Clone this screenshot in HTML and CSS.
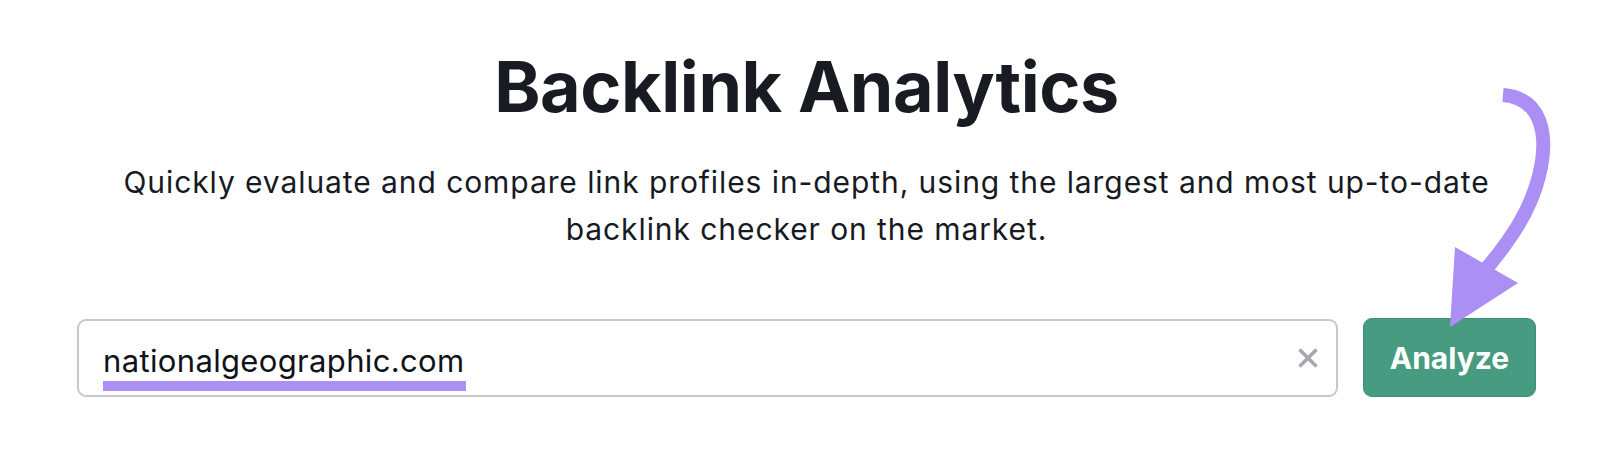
FILE: index.html
```html
<!DOCTYPE html>
<html lang="en">
<head>
<meta charset="utf-8">
<title>Backlink Analytics</title>
<link rel="stylesheet" href="styles.css">
</head>
<body>
<main class="page">
  <h1 class="title">Backlink Analytics</h1>
  <p class="lead">Quickly evaluate and compare link profiles in-depth, using the largest and most up-to-date backlink checker on the market.</p>
  <form class="search">
    <div class="field">
      <span class="value">nationalgeographic.com</span>
      <svg class="clear" viewBox="0 0 20 20" width="20" height="20" aria-hidden="true">
        <path d="M1.5 1.5 L18.5 18.5 M18.5 1.5 L1.5 18.5" stroke="currentColor" stroke-width="3.6" stroke-linecap="butt"/>
      </svg>
    </div>
    <button class="analyze" type="button">Analyze</button>
  </form>
</main>
<svg class="arrow" width="1600" height="475" viewBox="0 0 1600 475" aria-hidden="true">
  <path d="M1503 95 C1540 98 1550 132 1539 176 C1530 212 1510 240 1487 268" fill="none" stroke="#ab8ff4" stroke-width="14"/>
  <polygon points="1455,247 1518,283 1450,327" fill="#ab8ff4"/>
</svg>
</body>
</html>
```
FILE: styles.css
```css
html, body {
  margin: 0;
  padding: 0;
  background: #ffffff;
}
body {
  width: 1600px;
  height: 475px;
  overflow: hidden;
  position: relative;
  font-family: Inter, "Liberation Sans", sans-serif;
  color: #171a22;
}
.page {
  margin-left: 77px;
  width: 1459px;
  display: flex;
  flex-direction: column;
  align-items: center;
}
.title {
  margin: 44px 0 0;
  font-size: 70px;
  line-height: 85px;
  font-weight: 700;
  letter-spacing: -0.4px;
  color: #191b23;
}
.lead {
  margin: 30px 0 0;
  font-size: 30px;
  line-height: 47px;
  letter-spacing: 0.92px;
  text-align: center;
  width: 1420px;
  color: #171a22;
}
.search {
  margin-top: 66px;
  width: 100%;
  display: flex;
  gap: 25px;
}
.field {
  flex: 1;
  height: 78px;
  box-sizing: border-box;
  border: 2px solid #c6c8cf;
  border-radius: 9px;
  display: flex;
  align-items: center;
  padding: 0 18px 0 24px;
}
.value {
  flex: 1;
  font-size: 31px;
  letter-spacing: 0.35px;
  color: #10121a;
  position: relative;
  top: 2px;
}
.value::after {
  content: "";
  position: absolute;
  left: 0;
  top: 100%;
  width: 363px;
  height: 10px;
  margin-top: 2px;
  background: #ab8ff4;
}
.clear {
  color: #a6a8b0;
}
.analyze {
  width: 173px;
  height: 79px;
  margin-top: -1px;
  border: 1px solid #3d8f75;
  border-radius: 9px;
  background: #469b81;
  color: #ffffff;
  font-family: Inter, "Liberation Sans", sans-serif;
  font-size: 30px;
  font-weight: 700;
  padding: 0;
}
.arrow {
  position: absolute;
  left: 0;
  top: 0;
  pointer-events: none;
}
```
